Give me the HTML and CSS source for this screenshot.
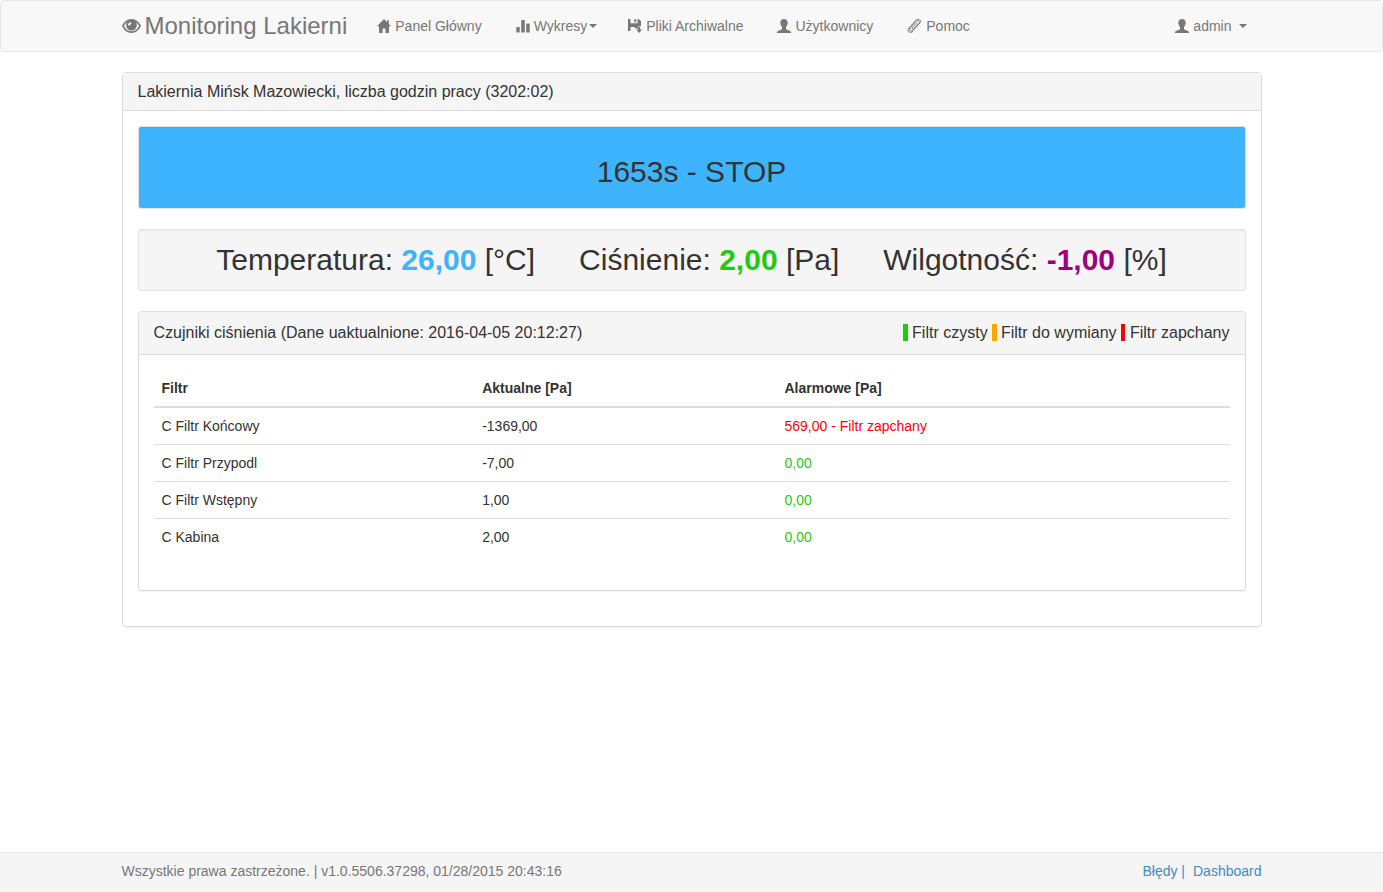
FILE: index.html
```html
<!DOCTYPE html>
<html lang="pl">
<head>
<meta charset="utf-8">
<meta name="viewport" content="width=device-width, initial-scale=1">
<title>Monitoring Lakierni</title>
<link rel="stylesheet" href="styles.css">
</head>
<body>
<svg class="sprite" aria-hidden="true">
  <symbol id="user" viewBox="0 0 14 14"><path d="M7 0C4.700 0 3.400 1.300 3.400 3.400c0 .5-.3.600-.2 1.200.1.600.5.700.6 1.200.2 1 .7 1.700 1.200 2.300v1.600c0 .7-.7.900-1.600 1.200C1.700 11.400 0 12 0 13.200V14h14v-.8c0-1.200-1.700-1.800-3.400-2.300C9.700 10.600 9 10.400 9 9.700V8.100c.5-.6 1-1.300 1.200-2.300.1-.5.5-.6.6-1.200.1-.6-.2-.7-.2-1.200C10.600 1.300 9.300 0 7 0z"/></symbol>
</svg>
<nav class="navbar">
  <div class="container navbar-inner">
    <a class="brand" href="#">
      <svg class="eye" viewBox="0 0 19 14" aria-hidden="true"><path fill-rule="evenodd" d="M9.500 0C5.200 0 1.900 3 0 7c1.900 4 5.200 7 9.500 7s7.600-3 9.500-7C17.100 3 13.800 0 9.500 0zM1.900 7C2.800 5.300 4 3.900 5.300 2.900 4.500 3.900 4.200 5.100 4.200 6.300c0 3 2.300 5.300 5.300 5.300s5.300-2.300 5.300-5.300c0-1.200-.3-2.400-1.100-3.400C15 3.900 16.200 5.300 17.100 7c-1.700 3.300-4.400 5.300-7.600 5.300S3.600 10.300 1.900 7zM8.400 3.200l1.200 1.500C8.500 5 8 5.700 7.800 6.700L6 6.200c.1-1.600 1-2.600 2.400-3z"/></svg>
      <span>Monitoring Lakierni</span>
    </a>
    <ul class="nav">
      <li><a class="nav-link" href="#"><svg class="icon" viewBox="0 0 14 14" aria-hidden="true"><path d="M7 0L0 7.300h2V14h3.600V9.500h2.800V14H12V7.300h2L11.800 5V1.200H10v2z"/></svg><span>Panel Główny</span></a></li>
      <li><a class="nav-link" href="#"><svg class="icon" viewBox="0 0 14 14" aria-hidden="true"><rect x="0.300" y="8" width="3.400" height="5.500" rx=".6"/><rect x="5.200" y="1" width="3.600" height="12.500" rx=".6"/><rect x="10.200" y="4.500" width="3.500" height="9" rx=".6"/></svg><span>Wykresy</span><span class="caret"></span></a></li>
      <li><a class="nav-link" href="#"><svg class="icon" viewBox="0 0 14 14" aria-hidden="true"><path d="M0 0h2.500v4.300h7V0h1L13 2.200V7h-3v2.500H7.500L6.300 8H2.500v4H0zM6.300.3h1.900v3H6.300zM10.200 7.500h2v3H14L11.200 14l-2.900-3.500h1.900z"/></svg><span>Pliki Archiwalne</span></a></li>
      <li><a class="nav-link" href="#"><svg class="icon" aria-hidden="true"><use href="#user"/></svg><span>Użytkownicy</span></a></li>
      <li><a class="nav-link" href="#"><svg class="icon clip" viewBox="0 0 15 14" aria-hidden="true"><path d="M9.600 4L5.200 8.900c-.8 1 .5 2.100 1.400 1.200l5.200-5.800c1.700-2-.6-4.100-2.500-2.300L3.200 8.700c-1.900 2.300.9 4.700 3 2.600l6.600-7.200C15.300 1 11.600-1.300 8.900 1.400L2 9c-2.400 3 .8 6 3.700 3.600"/></svg><span>Pomoc</span></a></li>
    </ul>
    <a class="nav-link account" href="#"><svg class="icon" aria-hidden="true"><use href="#user"/></svg><span>admin</span><span class="caret"></span></a>
  </div>
</nav>
<main class="container">
  <section class="panel">
    <h1 class="panel-heading">Lakiernia Mińsk Mazowiecki, liczba godzin pracy (3202:02)</h1>
    <div class="panel-body">
      <div class="well status"><h2 class="status-text">1653s - STOP</h2></div>
      <div class="well metrics">
        <span>Temperatura: <b class="blue">26,00</b> [°C]</span>
        <span>Ciśnienie: <b class="green">2,00</b> [Pa]</span>
        <span>Wilgotność: <b class="purple">-1,00</b> [%]</span>
      </div>
      <section class="panel">
        <div class="panel-heading sensors-heading">
          <h3 class="title">Czujniki ciśnienia (Dane uaktualnione: 2016-04-05 20:12:27)</h3>
          <div><span class="key-clean">&nbsp;</span> Filtr czysty <span class="key-replace">&nbsp;</span> Filtr do wymiany <span class="key-clogged">&nbsp;</span> Filtr zapchany</div>
        </div>
        <div class="panel-body">
          <table class="table">
            <thead><tr><th class="col-name">Filtr</th><th class="col-current">Aktualne [Pa]</th><th>Alarmowe [Pa]</th></tr></thead>
            <tbody>
              <tr><td>C Filtr Końcowy</td><td>-1369,00</td><td class="red">569,00 - Filtr zapchany</td></tr>
              <tr><td>C Filtr Przypodl</td><td>-7,00</td><td class="green">0,00</td></tr>
              <tr><td>C Filtr Wstępny</td><td>1,00</td><td class="green">0,00</td></tr>
              <tr><td>C Kabina</td><td>2,00</td><td class="green">0,00</td></tr>
            </tbody>
          </table>
        </div>
      </section>
    </div>
  </section>
</main>
<footer class="footer">
  <div class="container footer-inner">
    <span>Wszystkie prawa zastrzeżone. | v1.0.5506.37298, 01/28/2015 20:43:16</span>
    <div class="footer-links"><a href="#">Błędy |</a><a href="#">Dashboard</a></div>
  </div>
</footer>
</body>
</html>
```
FILE: styles.css
```css
* { box-sizing: border-box; }
body {
  margin: 0;
  min-height: 100vh;
  display: flex;
  flex-direction: column;
  font: 14px/20px "Liberation Sans", Arial, sans-serif;
  color: #333;
  background: #fff;
}
a { color: #428bca; text-decoration: none; }
.sprite { display: none; }
.container {
  width: 100%;
  max-width: 1170px;
  margin: 0 auto;
  padding: 0 15px;
}
main.container { flex: 1; }

.navbar {
  margin-bottom: 20px;
  background: #f8f8f8;
  border: 1px solid #e7e7e7;
  border-radius: 4px;
}
.navbar-inner { display: flex; align-items: center; min-height: 50px; }
.brand {
  display: flex;
  align-items: center;
  gap: 4px;
  margin-right: 15px;
  font-size: 24px;
  color: #777;
  white-space: nowrap;
}
.eye { width: 19px; height: 14px; fill: currentColor; }
.nav { display: flex; gap: 4px; margin: 0; padding: 0; list-style: none; }
.nav-link {
  display: flex;
  align-items: center;
  padding: 15px;
  color: #777;
  white-space: nowrap;
}
.icon { width: 14px; height: 14px; margin-right: 4px; fill: currentColor; }
.clip {
  width: 15px;
  fill: none;
  stroke: currentColor;
  stroke-width: 1;
  stroke-linecap: round;
}
.caret {
  margin-left: 2px;
  border: 4px solid transparent;
  border-top-color: currentColor;
  border-bottom: 0;
}
.nav .caret { margin-right: -3px; }
.account { margin-left: auto; }
.account .caret { margin-left: 7px; }

.panel {
  margin-bottom: 20px;
  border: 1px solid #ddd;
  border-radius: 4px;
  background: #fff;
  box-shadow: 0 1px 1px rgba(0, 0, 0, .05);
}
.panel-heading {
  margin: 0;
  padding: 10px 15px;
  font-size: 16px;
  font-weight: normal;
  line-height: 17px;
  background: #f5f5f5;
  border-bottom: 1px solid #ddd;
  border-radius: 3px 3px 0 0;
}
.panel-body { padding: 15px; }
.well {
  margin-bottom: 20px;
  padding: 9px;
  background: #f5f5f5;
  border: 1px solid #e3e3e3;
  border-radius: 3px;
  box-shadow: inset 0 1px 1px rgba(0, 0, 0, .05);
  font-size: 30px;
  text-align: center;
}
.status { background: #3eb4ff; }
.status-text { margin: 20px 0 12px; font-size: 30px; font-weight: normal; line-height: 31px; }
.metrics { display: flex; flex-wrap: wrap; justify-content: center; column-gap: 44px; line-height: 42px; }
.sensors-heading {
  display: flex;
  flex-wrap: wrap;
  justify-content: space-between;
  line-height: 22px;
}
.title { margin: 0; font-size: 16px; font-weight: normal; }
.key-clean { background: #1fcb12; }
.key-replace { background: #ffa500; }
.key-clogged { background: #f00; }
.blue { color: #3eb4ff; }
.green { color: #1fcb12; }
.purple { color: #a0007c; }
.red { color: #f00; }

.table { width: 100%; margin-bottom: 20px; border-collapse: collapse; }
.table th, .table td { padding: 8px; text-align: left; border-top: 1px solid #ddd; }
.table th { border-top: 0; border-bottom: 2px solid #ddd; }
.col-name { width: 29.8%; }
.col-current { width: 28.1%; }

.footer { background: #f5f5f5; border-top: 1px solid #e7e7e7; color: #777; }
.footer-inner { display: flex; justify-content: space-between; padding-top: 8px; padding-bottom: 11px; }
.footer-links { display: flex; gap: 8px; }
```
